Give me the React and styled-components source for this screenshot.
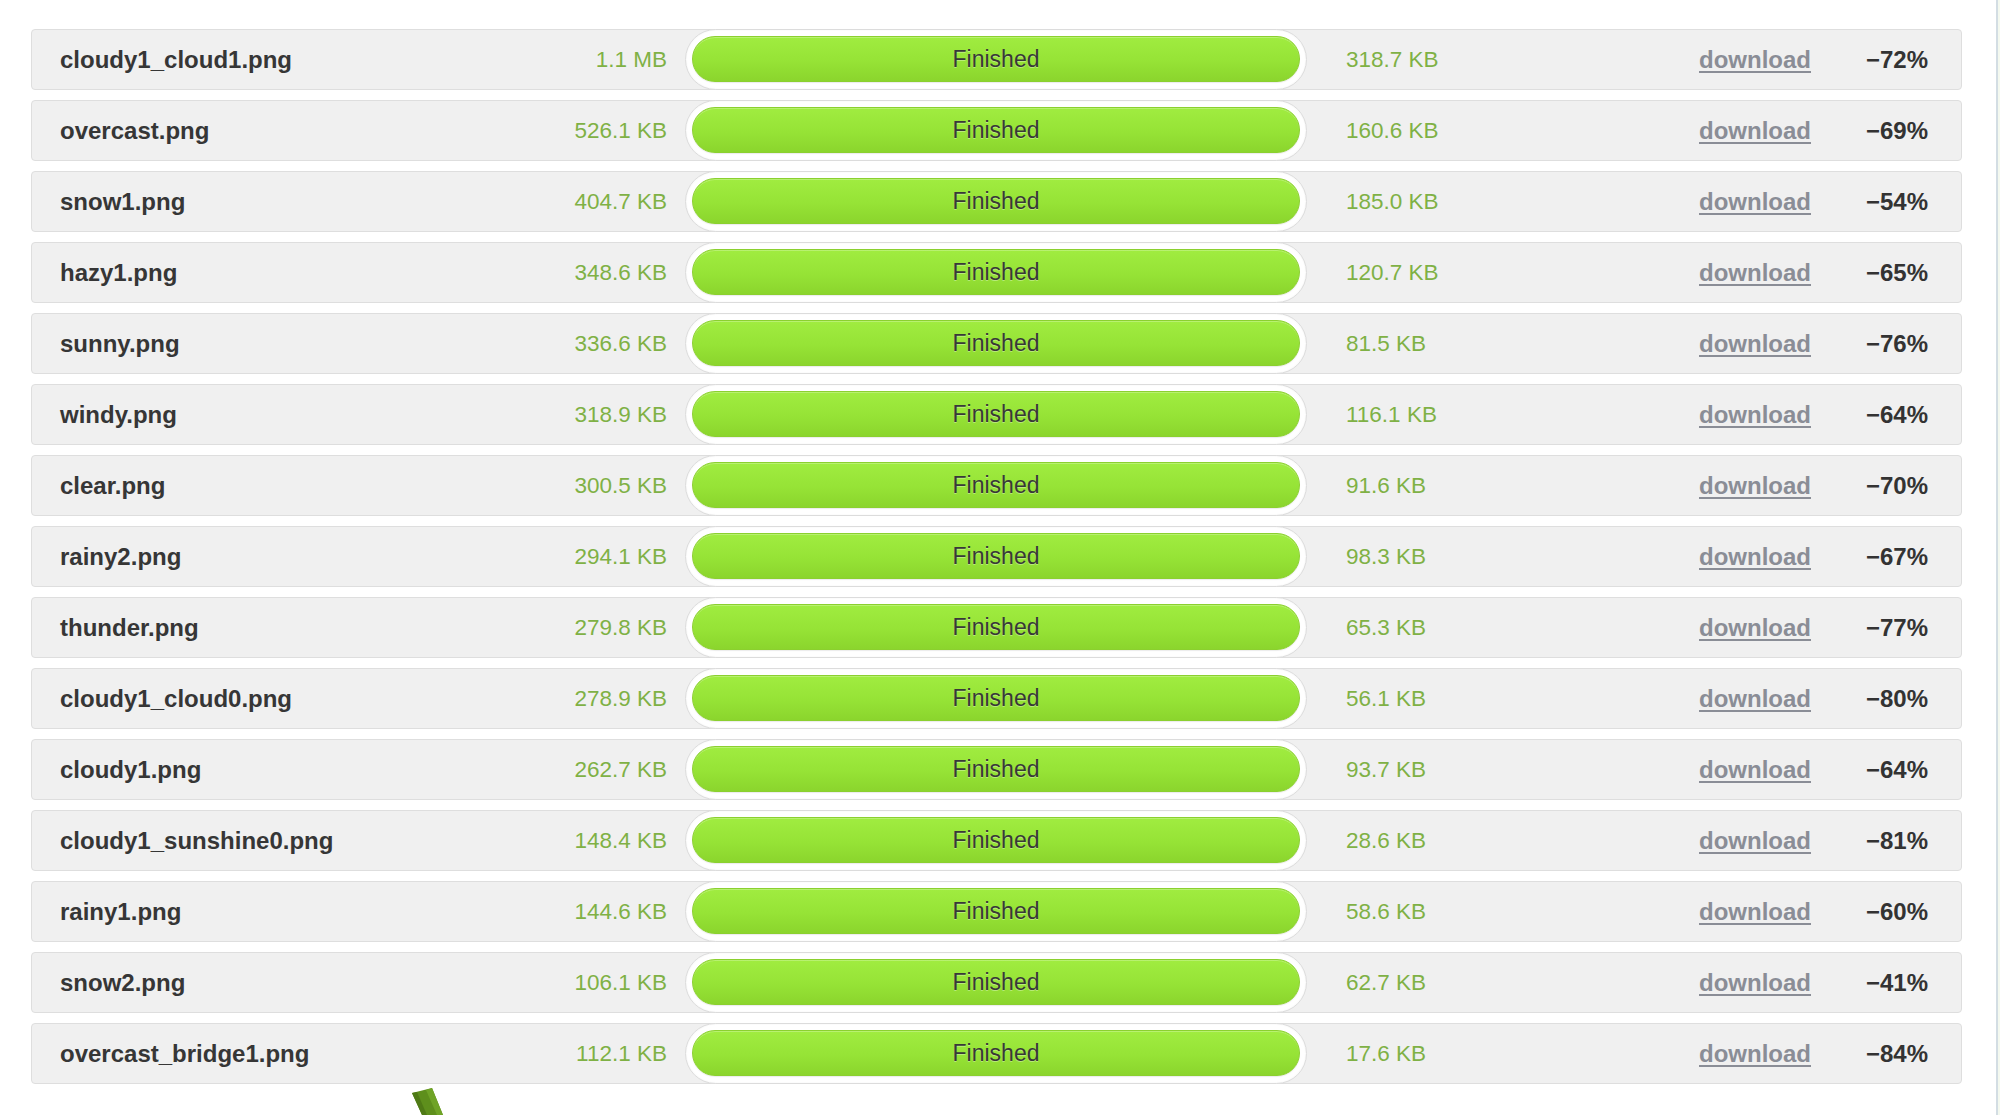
import React from "react";
import styled, { createGlobalStyle } from "styled-components";

const files = [
  { name: "cloudy1_cloud1.png", size: "1.1 MB", out: "318.7 KB", saved: "72" },
  { name: "overcast.png", size: "526.1 KB", out: "160.6 KB", saved: "69" },
  { name: "snow1.png", size: "404.7 KB", out: "185.0 KB", saved: "54" },
  { name: "hazy1.png", size: "348.6 KB", out: "120.7 KB", saved: "65" },
  { name: "sunny.png", size: "336.6 KB", out: "81.5 KB", saved: "76" },
  { name: "windy.png", size: "318.9 KB", out: "116.1 KB", saved: "64" },
  { name: "clear.png", size: "300.5 KB", out: "91.6 KB", saved: "70" },
  { name: "rainy2.png", size: "294.1 KB", out: "98.3 KB", saved: "67" },
  { name: "thunder.png", size: "279.8 KB", out: "65.3 KB", saved: "77" },
  { name: "cloudy1_cloud0.png", size: "278.9 KB", out: "56.1 KB", saved: "80" },
  { name: "cloudy1.png", size: "262.7 KB", out: "93.7 KB", saved: "64" },
  { name: "cloudy1_sunshine0.png", size: "148.4 KB", out: "28.6 KB", saved: "81" },
  { name: "rainy1.png", size: "144.6 KB", out: "58.6 KB", saved: "60" },
  { name: "snow2.png", size: "106.1 KB", out: "62.7 KB", saved: "41" },
  { name: "overcast_bridge1.png", size: "112.1 KB", out: "17.6 KB", saved: "84" },
];

const GlobalStyle = createGlobalStyle`
  html, body {
    margin: 0;
    padding: 0;
    background: #ffffff;
  }
  body {
    font-family: "Liberation Sans", Arial, Helvetica, sans-serif;
    overflow: hidden;
  }
`;

const Page = styled.div`
  position: relative;
  display: flex;
  width: 2000px;
  height: 1115px;
  overflow: hidden;
  background: #ffffff;
`;

const Main = styled.main`
  flex: 1;
  padding: 29px 34px 0 31px;
`;

const SideEdge = styled.div`
  width: 2px;
  border-left: 2px solid #d3dde3;
  background: #f4f9ef;
`;

const List = styled.ul`
  list-style: none;
  margin: 0;
  padding: 0;
  display: flex;
  flex-direction: column;
  gap: 10px;
`;

const Row = styled.li`
  display: flex;
  align-items: center;
  height: 61px;
  box-sizing: border-box;
  padding: 0 33px 0 28px;
  background: #f0f0f0;
  border: 1px solid #dedede;
  border-radius: 4px;
`;

const FileName = styled.span`
  width: 447px;
  flex: none;
  font-size: 24px;
  font-weight: 700;
  color: #363636;
  white-space: nowrap;
`;

const Size = styled.span`
  width: 160px;
  flex: none;
  text-align: right;
  font-size: 22.5px;
  color: #7fb145;
  margin-right: 18px;
`;

const Track = styled.div`
  width: 622px;
  flex: none;
  height: 61px;
  box-sizing: border-box;
  padding: 6px 6px 7px;
  background: #ffffff;
  border: 1px solid #dcdcdc;
  border-radius: 31px;
  box-shadow: inset 0 0 2px rgba(0, 0, 0, 0.06);
`;

const Bar = styled.div`
  height: 100%;
  box-sizing: border-box;
  display: flex;
  align-items: center;
  justify-content: center;
  border-radius: 24px;
  border: 1px solid #8bd02f;
  background: linear-gradient(to bottom, #a0ec40 0%, #96e336 55%, #8bd52d 100%);
  box-shadow: inset 0 1px 0 rgba(255, 255, 255, 0.25), 0 1px 1px rgba(0, 0, 0, 0.08);
  font-size: 23px;
  color: #383838;
  text-shadow: 0 1px 0 rgba(255, 255, 255, 0.35);
`;

const Compressed = styled.span`
  flex: 1;
  margin-left: 39px;
  font-size: 22.5px;
  color: #7fb145;
`;

const Download = styled.a`
  font-size: 24px;
  font-weight: 700;
  color: #8a8d96;
  text-decoration: underline;
  text-decoration-thickness: 2px;
  text-underline-offset: 3px;
  cursor: pointer;
`;

const Saved = styled.span`
  width: 62px;
  flex: none;
  margin-left: 55px;
  font-size: 24px;
  font-weight: 700;
  color: #333333;
  white-space: nowrap;
`;

// bit of the mascot artwork peeking in under the list
const Stick = styled.svg`
  position: absolute;
  left: 408px;
  top: 1084px;
  width: 40px;
  height: 31px;
`;

const FileRow = ({ file }) => (
  <Row>
    <FileName>{file.name}</FileName>
    <Size>{file.size}</Size>
    <Track>
      <Bar>Finished</Bar>
    </Track>
    <Compressed>{file.out}</Compressed>
    <Download>download</Download>
    <Saved>{"\u2212" + file.saved + "%"}</Saved>
  </Row>
);

export default function App() {
  return (
    <Page>
      <GlobalStyle />
      <Main>
        <List>
          {files.map((f) => (
            <FileRow key={f.name} file={f} />
          ))}
        </List>
      </Main>
      <SideEdge />
      <Stick viewBox="0 0 40 31">
        <polygon points="4,9 24,4 35,31 14,31" fill="#5e8f1c" />
        <polygon points="4,9 9,8 19,31 14,31" fill="#4f7a16" />
        <polygon points="18,6 24,4 35,31 29,31" fill="#6fa326" />
      </Stick>
    </Page>
  );
}
